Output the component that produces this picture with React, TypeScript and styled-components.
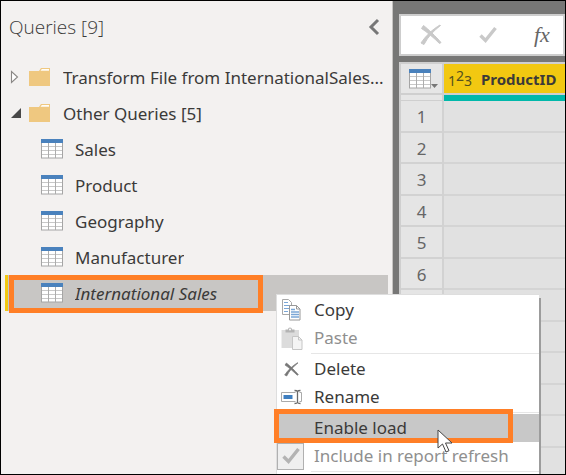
import React from "react";
import styled, { createGlobalStyle, css } from "styled-components";

const GlobalStyle = createGlobalStyle`
  *, *::before, *::after { box-sizing: border-box; }
  body { margin: 0; }
  button { font: inherit; color: inherit; border: 0; margin: 0; padding: 0; background: none; text-align: left; }
`;

const Frame = styled.div`
  position: relative;
  display: flex;
  height: 100vh;
  overflow: hidden;
  border: 1px solid #000;
  background: #777776;
  color: #3b3a39;
  font-family: "Noto Sans", "Open Sans", sans-serif;
  font-size: 17px;
  line-height: 24px;
`;

const Sidebar = styled.aside`
  flex: 0 0 392px;
  padding: 10px 4px 0;
  background: #f3f1f0;
  border-right: 1px solid #c6c4c2;
`;

const PaneHeader = styled.header`
  display: flex;
  align-items: center;
  justify-content: space-between;
  height: 32px;
  margin-bottom: 16px;
  padding: 0 8px 0 4px;
`;

const PaneTitle = styled.h1`
  margin: 0;
  font-family: "Open Sans", sans-serif;
  font-size: 19px;
  font-weight: 300;
  line-height: 32px;
  color: #3b3a39;
`;

const CollapseButton = styled.button`
  display: flex;
`;

const Tree = styled.ul`
  margin: 0;
  padding: 0;
  list-style: none;
`;

const TreeItem = styled.li`
  position: relative;
`;

const TreeRow = styled.button<{ $level: number; $selected?: boolean }>`
  display: flex;
  align-items: center;
  width: 100%;
  height: 36px;
  padding-left: ${(p) => (p.$level === 1 ? 5 : 36)}px;
  ${(p) =>
    p.$selected &&
    css`
      padding-left: 33px;
      border-left: 3px solid #f2c811;
      background: #c8c6c4;
      font-style: italic;
    `}
`;

const Arrow = styled.span`
  display: flex;
  width: 19px;
`;

const TreeIcon = styled.span`
  display: flex;
  flex: none;
  width: 34px;
`;

const TreeLabel = styled.span`
  padding-top: 2px;
  overflow: hidden;
  white-space: nowrap;
`;

const Highlight = styled.span<{ $area: "row" | "menu" }>`
  position: absolute;
  z-index: 1;
  border: 5px solid #ff7f27;
  pointer-events: none;
  ${(p) =>
    p.$area === "row"
      ? css`
          left: 4px;
          top: 0;
          width: 254px;
          height: 38px;
        `
      : css`
          left: -3px;
          right: 26px;
          top: -5px;
          bottom: -1px;
        `}
`;

const Main = styled.main`
  flex: 1;
  min-width: 0;
  padding: 13px 0 0 6px;
`;

const FormulaBar = styled.div`
  display: flex;
  align-items: center;
  height: 42px;
  margin-bottom: 6px;
  padding-left: 19px;
  gap: 37px;
  border: 2px solid #cdcdcd;
  background: #fff;
`;

const BarButton = styled.button`
  display: flex;
  align-items: center;
  justify-content: center;
`;

const Fx = styled.span`
  font: italic 22px/24px "Liberation Serif", serif;
  color: #666;
`;

const Grid = styled.table`
  width: 100%;
  table-layout: fixed;
  border-spacing: 0;
  border: solid #cfcfcf;
  border-width: 2px 0 0 2px;
  background: #e1e1e1;
`;

const Corner = styled.td`
  width: 43px;
  height: 31px;
  padding: 0 0 0 8px;
  background: #e6e6e6;
  border: solid #cfcfcf;
  border-width: 0 2px 2px 0;
`;

const CornerButton = styled.button`
  display: flex;
`;

const ColumnHead = styled.th`
  height: 31px;
  padding: 0 0 0 4px;
  background: #f2c811;
  border-bottom: 2px solid #cfcfcf;
  text-align: left;
  white-space: nowrap;
  font-size: 15px;
`;

const HeadContent = styled.div`
  display: flex;
  align-items: center;
  height: 29px;
  overflow: hidden;
`;

const TypeTag = styled.span`
  display: flex;
  align-items: flex-end;
  width: 33px;
  height: 29px;
  font-size: 14px;
  font-weight: 400;
  color: #55501f;
`;

const Raised = styled.span`
  align-self: flex-start;
`;

const Quality = styled.td<{ $filled?: boolean }>`
  height: 6px;
  padding: 0;
  background: ${(p) => (p.$filled ? "#01b8aa" : "#e6e6e6")};
  border-right: ${(p) => (p.$filled ? 0 : 2)}px solid #cfcfcf;
  border-bottom: ${(p) => (p.$filled ? 0 : 1)}px solid #cfcfcf;
`;

const DataRow = styled.tr`
  height: 31px;
  &:nth-child(odd) {
    height: 32px;
  }
`;

const RowNumber = styled.th`
  padding: 2px 0 0;
  background: #e5e5e5;
  border: solid #d2d2d2;
  border-width: 0 2px 2px 0;
  font-weight: 400;
  color: #666;
`;

const Cell = styled.td`
  padding: 0;
  border-bottom: 2px solid #d4d4d4;
`;

const Menu = styled.div`
  position: absolute;
  left: 275px;
  top: 293px;
  width: 263px;
  min-height: 200px;
  padding-top: 1px;
  background: #fff;
  border: solid #dedede;
  border-width: 1px 0 0 1px;
  box-shadow: 2px 4px 0 #9c9c9c;
`;

const itemLayout = css`
  position: relative;
  display: flex;
  align-items: center;
  width: 100%;
  height: 28px;
  white-space: nowrap;
`;

const MenuItem = styled.button<{ $active?: boolean }>`
  ${itemLayout}
  background: ${(p) => (p.$active ? "#c8c8c8" : "none")};
  &:disabled {
    color: #8f8f8f;
  }
`;

const MenuCheck = styled.label`
  ${itemLayout}
  color: #8f8f8f;
`;

const MenuIcon = styled.span<{ $inset?: boolean }>`
  display: flex;
  flex: none;
  width: 37px;
  padding-left: ${(p) => (p.$inset ? 7 : 4)}px;
`;

const CheckSlot = styled.span`
  display: grid;
  flex: none;
  width: 37px;
  align-items: center;
  & > * {
    grid-area: 1 / 1;
  }
  & > svg {
    margin-left: 5px;
    pointer-events: none;
  }
`;

const CheckInput = styled.input`
  appearance: none;
  width: 27px;
  height: 27px;
  margin: 0;
  border: 1px solid #b0b0b0;
  background: #efefef;
`;

const Separator = styled.hr`
  height: 1px;
  margin: 1px 0 1px 34px;
  border: 0;
  background: #e6e6e6;
`;

const Pointer = styled.span`
  position: absolute;
  z-index: 2;
  left: 160px;
  top: 15px;
  display: flex;
  pointer-events: none;
`;

const TableIcon = () => (
  <svg width="22" height="20" viewBox="0 0 22 20" aria-hidden="true">
    <rect x=".5" y=".5" width="21" height="18.5" fill="#fff" stroke="#a5a5a5" />
    <path d="M1 7.5h20M1 11.5h20M1 15.5h20" stroke="#c8c8c8" strokeWidth="1.2" />
    <path d="M7.5 4v15M14.5 4v15" stroke="#adadad" />
    <path d="M0 0h22v4H0z" fill="#4a82bd" />
  </svg>
);

const FolderIcon = () => (
  <svg width="21" height="18" viewBox="0 0 21 18" aria-hidden="true">
    <path d="M0 3h10l2-3h9v18H0z" fill="#efc880" />
    <path d="M11.5 2.7 12.8 1H20v1.7z" fill="#fffdf8" />
  </svg>
);

const ClosedArrow = () => (
  <svg width="9" height="14" viewBox="0 0 9 14" aria-hidden="true">
    <path d="M1.5 1.5v11L7.5 7z" fill="#fff" stroke="#8a8886" strokeWidth="1.1" />
  </svg>
);

const OpenArrow = () => (
  <svg width="12" height="12" viewBox="0 0 12 12" aria-hidden="true">
    <path d="M11 1v10H1z" fill="#484848" />
  </svg>
);

const CopyIcon = () => (
  <svg width="21" height="22" viewBox="0 0 21 22" aria-hidden="true">
    <path d="M1.500 .5h6l3 3v12h-9z" fill="#fff" stroke="#a8a8a8" />
    <path d="M3 3.500h4M3 6.500h6M3 9.500h6M3 12.500h4" stroke="#7aa6d6" />
    <path d="M8.500 6.500h7l3.500 3.500v11H8.500z" fill="#fff" stroke="#989898" />
    <path d="M15.500 6.500V10H19" fill="none" stroke="#989898" />
    <path d="M10 10.500h4M10 13h8M10 15.500h8M10 18h8" stroke="#7aa6d6" strokeWidth="1.300" />
  </svg>
);

const PasteIcon = () => (
  <svg width="22" height="23" viewBox="0 0 22 23" aria-hidden="true">
    <path d="M.5 3h17.500v18H.5z" fill="#dcdcdc" />
    <path d="M4.500 2.500h2.500a2 2 0 0 1 4 0h2.500v3h-9z" fill="#b4b4b4" />
    <circle cx="9" cy="2.600" r="1" fill="#fff" />
    <path d="M11.500 9.500h6l3.500 3.500v9.500h-9.500z" fill="#f4f4f4" stroke="#c6c6c6" />
    <path d="M17.500 9.500V13H21" fill="none" stroke="#c6c6c6" />
  </svg>
);

const CrossIcon = ({ size, color }: { size: number; color: string }) => (
  <svg width={size} height={size} viewBox="0 0 22 22" aria-hidden="true">
    <path
      d="M3.500 1.500C8 5 16 12.500 21 18.500l-1.500 1C14 14 7 8 1.500 4.500zM20.500 1.500C14 6.500 8 12.500 4 20.500l-3-1.500C5.500 12 13 5 20 1z"
      fill={color}
      stroke={color}
      strokeWidth="1"
    />
  </svg>
);

const TickIcon = ({ color }: { color: string }) => (
  <svg width="18" height="18" viewBox="0 0 18 18" aria-hidden="true">
    <path d="M1.500 9.500 6.500 14.500 16.500 2" fill="none" stroke={color} strokeWidth="3.400" />
  </svg>
);

const RenameIcon = () => (
  <svg width="22" height="16" viewBox="0 0 22 16" aria-hidden="true">
    <path d="M.5 3.500h20v9H.5z" fill="#fff" stroke="#aaa" />
    <path d="M2.500 6h9v4h-9z" fill="#3f7fc0" />
    <path d="M16.500 2v12" stroke="#fff" strokeWidth="4" />
    <path
      d="M13.500 1.500q2.500 0 3 1 .5-1 3-1M16.500 2v12M13.500 14.500q2.500 0 3-1 .5 1 3 1"
      fill="none"
      stroke="#6a6a6a"
      strokeWidth="1.300"
    />
  </svg>
);

const PointerIcon = () => (
  <svg width="16" height="24" viewBox="0 0 16 24" aria-hidden="true">
    <path d="M1 1v18l4.500-4 3.500 8 3-1.300-3.500-7.700H15z" fill="#fff" stroke="#444" strokeWidth="1" />
  </svg>
);

const queries = ["Sales", "Product", "Geography", "Manufacturer", "International Sales"];
const loadedRows = 6;
const rows = Array.from({ length: 12 }, (_, i) => i + 1);

export default function App() {
  return (
    <>
      <GlobalStyle />
      <Frame>
        <Sidebar>
          <PaneHeader>
            <PaneTitle>Queries [9]</PaneTitle>
            <CollapseButton aria-label="Collapse pane">
              <svg width="12" height="18" viewBox="0 0 12 18" aria-hidden="true">
                <path d="M10 2 3 9l7 7" fill="none" stroke="#777" strokeWidth="3" />
              </svg>
            </CollapseButton>
          </PaneHeader>
          <Tree>
            <TreeItem>
              <TreeRow $level={1} aria-expanded={false}>
                <Arrow><ClosedArrow /></Arrow>
                <TreeIcon><FolderIcon /></TreeIcon>
                <TreeLabel>Transform File from InternationalSales...</TreeLabel>
              </TreeRow>
            </TreeItem>
            <TreeItem>
              <TreeRow $level={1} aria-expanded={true}>
                <Arrow><OpenArrow /></Arrow>
                <TreeIcon><FolderIcon /></TreeIcon>
                <TreeLabel>Other Queries [5]</TreeLabel>
              </TreeRow>
              <Tree>
                {queries.map((name, i) => {
                  const selected = i === queries.length - 1;
                  return (
                    <TreeItem key={name}>
                      <TreeRow $level={2} $selected={selected}>
                        <TreeIcon><TableIcon /></TreeIcon>
                        <TreeLabel>{name}</TreeLabel>
                      </TreeRow>
                      {selected && <Highlight $area="row" />}
                    </TreeItem>
                  );
                })}
              </Tree>
            </TreeItem>
          </Tree>
        </Sidebar>

        <Main>
          <FormulaBar>
            <BarButton aria-label="Cancel"><CrossIcon size={22} color="#c9c9c9" /></BarButton>
            <BarButton aria-label="Commit"><TickIcon color="#c9c9c9" /></BarButton>
            <BarButton aria-label="Insert function"><Fx>fx</Fx></BarButton>
          </FormulaBar>
          <Grid>
            <thead>
              <tr>
                <Corner>
                  <CornerButton aria-label="Table options">
                    <TableIcon />
                    <svg width="8" height="20" viewBox="0 0 8 20" aria-hidden="true">
                      <path d="M0 15h7l-3.500 4z" fill="#777" />
                    </svg>
                  </CornerButton>
                </Corner>
                <ColumnHead scope="col">
                  <HeadContent>
                    <TypeTag>1<Raised>2</Raised>3</TypeTag>
                    ProductID
                  </HeadContent>
                </ColumnHead>
              </tr>
              <tr>
                <Quality />
                <Quality $filled />
              </tr>
            </thead>
            <tbody>
              {rows.map((n) => (
                <DataRow key={n}>
                  <RowNumber scope="row">{n <= loadedRows ? n : null}</RowNumber>
                  <Cell />
                </DataRow>
              ))}
            </tbody>
          </Grid>
        </Main>

        <Menu role="menu">
          <MenuItem role="menuitem"><MenuIcon><CopyIcon /></MenuIcon>Copy</MenuItem>
          <MenuItem role="menuitem" disabled><MenuIcon><PasteIcon /></MenuIcon>Paste</MenuItem>
          <Separator />
          <MenuItem role="menuitem"><MenuIcon $inset><CrossIcon size={15} color="#777" /></MenuIcon>Delete</MenuItem>
          <MenuItem role="menuitem"><MenuIcon><RenameIcon /></MenuIcon>Rename</MenuItem>
          <Separator />
          <MenuItem role="menuitem" $active>
            <MenuIcon />
            Enable load
            <Highlight $area="menu" />
            <Pointer><PointerIcon /></Pointer>
          </MenuItem>
          <MenuCheck>
            <CheckSlot>
              <CheckInput type="checkbox" defaultChecked disabled />
              <TickIcon color="#b3b3b3" />
            </CheckSlot>
            Include in report refresh
          </MenuCheck>
          <Separator />
        </Menu>
      </Frame>
    </>
  );
}
